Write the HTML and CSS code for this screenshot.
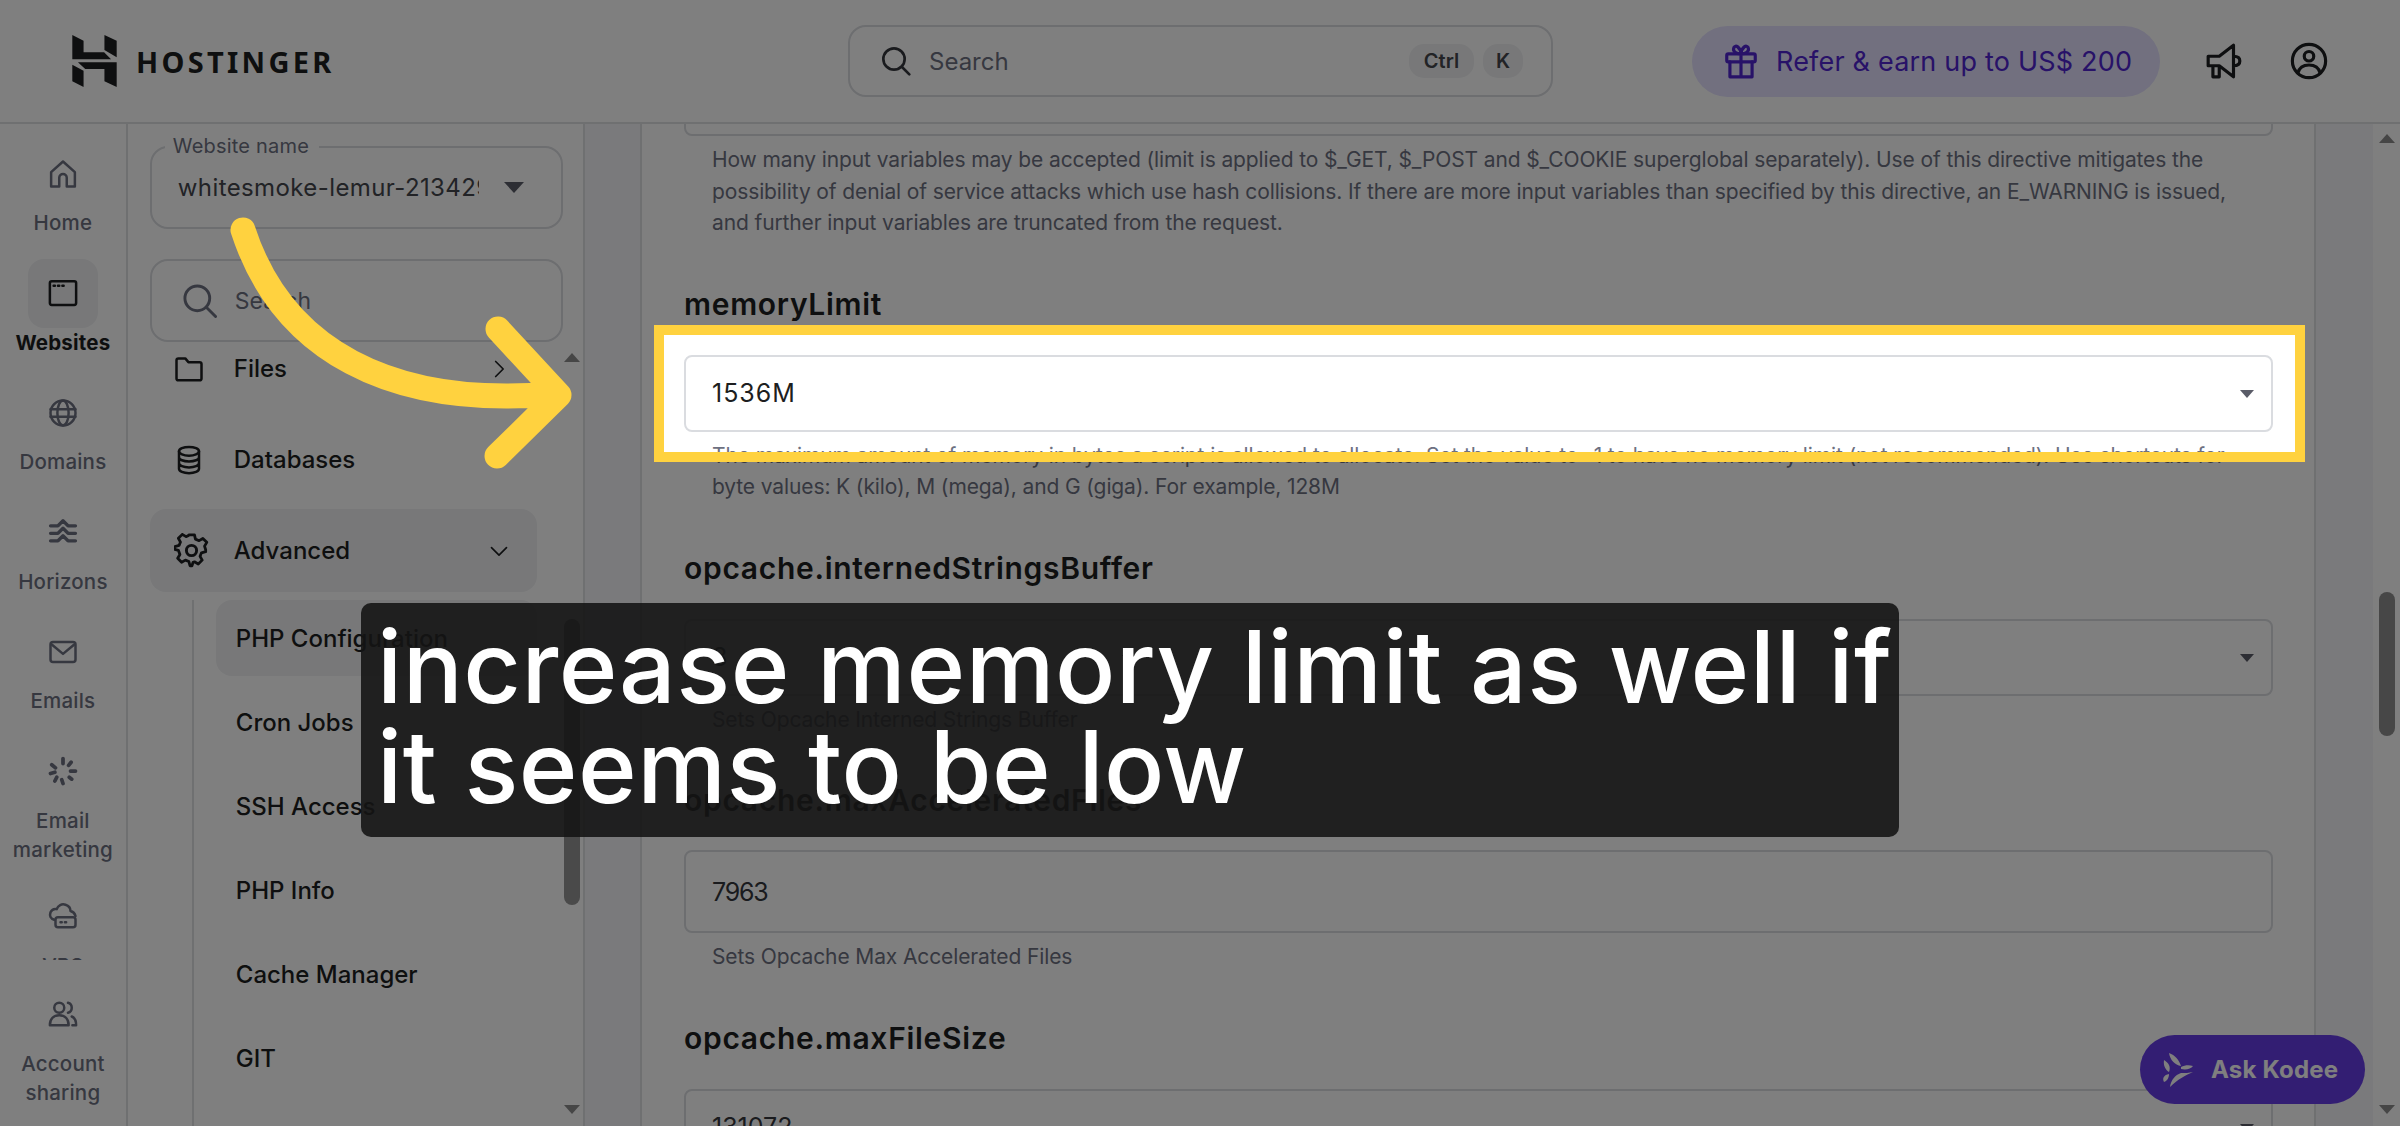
FILE: index.html
```html
<!DOCTYPE html>
<html lang="en">

<head>
    <meta charset="UTF-8">
    <title>PHP Configuration</title>
    <link rel="stylesheet" href="styles.css">
</head>

<body>
    <header class="topbar">
        <div class="brand">
            <svg class="brand-logo" viewBox="216 105 134 157">
                <polygon points="216,105 250,122 250,157 312,157 333,178 216,178" />
                <polygon points="313,105 350,122 350,172 313,150" />
                <polygon points="233,187 350,187 350,262 313,245 313,208 255,208" />
                <polygon points="216,195 250,213 250,262 216,245" />
            </svg>
            <span class="brand-name">HOSTINGER</span>
        </div>
        <div class="top-search">
            <svg class="icon top-search-icon" viewBox="0 0 24 24"><circle cx="10.5" cy="10.5" r="8" /><path d="M16.5 16.5 22 22" /></svg>
            <span class="top-search-text">Search</span>
            <span class="key key-ctrl">Ctrl</span>
            <span class="key key-k">K</span>
        </div>
        <div class="refer">
            <svg class="icon refer-icon" viewBox="0 0 24 24"><rect x="3" y="7.5" width="18" height="5" rx="1" /><path d="M5 12.5V22h14v-9.500M12 7.500V22M12 7.500C9 7.500 6.500 6 7.500 3.500 8.500 1.500 11.500 3 12 7.500ZM12 7.500C15 7.500 17.500 6 16.500 3.500 15.500 1.500 12.500 3 12 7.500Z" /></svg>
            <span>Refer &amp; earn up to US$ 200</span>
        </div>
        <svg class="icon top-icon megaphone" viewBox="0 0 24 24"><path d="M2 9h7l9-7v20l-9-7H2zM5 15v7h4v-7M18 9c2.500 0 4 1 4 3s-1.500 3-4 3" /></svg>
        <svg class="icon top-icon avatar" viewBox="0 0 24 24"><circle cx="12" cy="12" r="10.500" /><circle cx="12" cy="9" r="3" /><path d="M5 19.500c1-4 4-5 7-5s6 1 7 5" /></svg>
    </header>

    <div class="layout">
        <nav class="rail">
            <div class="rail-list">
                <a class="rail-item">
                    <span class="rail-icon"><svg class="icon" viewBox="0 0 24 24"><path d="M2.500 10.500 12 2l9.500 8.500V22H15v-7a3 3 0 0 0-6 0v7H2.500z" /></svg></span>
                    <span class="rail-label">Home</span>
                </a>
                <a class="rail-item is-active">
                    <span class="rail-icon"><svg class="icon" viewBox="0 0 24 24"><rect x="1.500" y="2.500" width="21" height="19" rx="1.500" /><path d="M4.500 6.200h1M8 6.200h1M11.500 6.200h1" /></svg></span>
                    <span class="rail-label">Websites</span>
                </a>
                <a class="rail-item">
                    <span class="rail-icon"><svg class="icon" viewBox="0 0 24 24"><circle cx="12" cy="12" r="10" /><ellipse cx="12" cy="12" rx="4.500" ry="10" /><path d="M2 9h20M2 15h20" /></svg></span>
                    <span class="rail-label">Domains</span>
                </a>
                <a class="rail-item">
                    <span class="rail-icon"><svg class="icon icon-wave" viewBox="0 0 24 24"><path d="M2 7h6l4-4 4 4h6M2 13h6l4-4 4 4h6M2 19h6l4-4 4 4h6" /></svg></span>
                    <span class="rail-label">Horizons</span>
                </a>
                <a class="rail-item">
                    <span class="rail-icon"><svg class="icon" viewBox="0 0 24 24"><rect x="2" y="4" width="20" height="16" rx="2" /><path d="m3 6 9 7.500L21 6" /></svg></span>
                    <span class="rail-label">Emails</span>
                </a>
                <a class="rail-item rail-item-two">
                    <span class="rail-icon"><svg class="icon icon-dots" viewBox="0 0 24 24"><path d="M12 2v4M18.500 5l-2 2.500M22 12h-4M19 18.500 17 17M12 22l-1-3M5.500 20 7 17M2 14l3.500-1M3 7l3 2.500" /></svg></span>
                    <span class="rail-label">Email<br>marketing</span>
                </a>
                <a class="rail-item">
                    <span class="rail-icon"><svg class="icon" viewBox="0 0 24 24"><path d="M5 15c-3-1-4-3-3-6 1-2 3-3 5-2.500C8 3.500 11 2 14 3c3 1 4 3 4 5 2 .5 3.500 2 4 4" /><rect x="6" y="13" width="16" height="8" rx="2" /><path d="M10 17h1M13.500 17h1" /></svg></span>
                    <span class="rail-label">VPS</span>
                </a>
            </div>
            <a class="rail-item rail-account">
                <span class="rail-icon"><svg class="icon" viewBox="0 0 24 24"><circle cx="9" cy="7" r="4" /><path d="M1.500 21c0-5 3-8 7.500-8s7.500 3 7.500 8zM16 3c4 1 4 7 0 8M19 14c2.500 1 3.500 4 3.500 7h-3" /></svg></span>
                <span class="rail-label">Account<br>sharing</span>
            </a>
        </nav>

        <aside class="sidebar">
            <fieldset class="site-picker">
                <legend>Website name</legend>
                <div class="site-row">
                    <span class="site-value">whitesmoke-lemur-213429</span>
                    <span class="caret caret-site"></span>
                </div>
            </fieldset>
            <div class="side-search">
                <svg class="icon side-search-icon" viewBox="0 0 24 24"><circle cx="10.500" cy="10.500" r="8.500" /><path d="M17 17l6 6" /></svg>
                <span>Search</span>
            </div>
            <div class="menu-clip">
                <ul class="menu">
                    <li class="menu-row">
                        <svg class="icon menu-icon" viewBox="0 0 24 24"><path d="M2 5a1.500 1.500 0 0 1 1.500-1.500H9l2.500 3h9A1.500 1.500 0 0 1 22 8v11.500a1.500 1.500 0 0 1-1.500 1.500h-17A1.500 1.500 0 0 1 2 19.500z" /></svg>
                        <span>Files</span>
                        <svg class="icon chevron" viewBox="0 0 24 24"><path d="m8 3 9 9-9 9" /></svg>
                    </li>
                    <li class="menu-row">
                        <svg class="icon menu-icon" viewBox="0 0 24 24"><ellipse cx="12" cy="5" rx="8" ry="3.500" /><path d="M4 5v14c0 2 3.500 3.500 8 3.500s8-1.500 8-3.500V5M4 9.700c0 2 3.500 3.500 8 3.500s8-1.500 8-3.500M4 14.400c0 2 3.500 3.500 8 3.500s8-1.500 8-3.500" /></svg>
                        <span>Databases</span>
                    </li>
                    <li class="menu-row is-open">
                        <svg class="icon menu-icon menu-icon-lg" viewBox="0 0 24 24"><circle cx="12" cy="12" r="3.500" /><path d="M10 2h4l.7 3 2.600 1.100 2.700-1.600 2.800 2.800-1.600 2.700L22 12.600V14l-3 .8-1 2.500 1.500 2.700-2.800 2.800-2.700-1.600-1 .3L12.200 24h-1.400l-.8-3-2.500-1-2.700 1.500-2.800-2.800 1.600-2.700L2.500 13 0 12.300v-2L3 9.500l1-2.400L2.500 4.400l2.800-2.800L8 3.200l1.500-.6z" transform="translate(.6 -.6) scale(.96)" /></svg>
                        <span>Advanced</span>
                        <svg class="icon chevron" viewBox="0 0 24 24"><path d="m3 8 9 9 9-9" /></svg>
                    </li>
                </ul>
                <ul class="submenu">
                    <li class="is-current">PHP Configuration</li>
                    <li>Cron Jobs</li>
                    <li>SSH Access</li>
                    <li>PHP Info</li>
                    <li>Cache Manager</li>
                    <li>GIT</li>
                </ul>
            </div>
            <div class="side-scroll">
                <span class="arrow-up"></span>
                <span class="side-thumb"></span>
                <span class="arrow-down"></span>
            </div>
        </aside>

        <main class="content">
            <div class="panel">
                <section class="field field-first">
                    <div class="box box-cut"></div>
                    <p class="help">How many input variables may be accepted (limit is applied to $_GET, $_POST and $_COOKIE superglobal separately). Use of this directive mitigates the<br>possibility of denial of service attacks which use hash collisions. If there are more input variables than specified by this directive, an E_WARNING is issued,<br>and further input variables are truncated from the request.</p>
                </section>
                <section class="field">
                    <h3>memoryLimit</h3>
                    <div class="box box-mem">1536M<span class="caret caret-box"></span></div>
                    <p class="help">The maximum amount of memory in bytes a script is allowed to allocate. Set the value to -1 to have no memory limit (not recommended). Use shortcuts for<br>byte values: K (kilo), M (mega), and G (giga). For example, 128M</p>
                </section>
                <section class="field">
                    <h3>opcache.internedStringsBuffer</h3>
                    <div class="box">8<span class="caret caret-box"></span></div>
                    <p class="help">Sets Opcache Interned Strings Buffer</p>
                </section>
                <section class="field">
                    <h3 class="label-tall">opcache.maxAcceleratedFiles</h3>
                    <div class="box box-tall">7963</div>
                    <p class="help">Sets Opcache Max Accelerated Files</p>
                </section>
                <section class="field">
                    <h3>opcache.maxFileSize</h3>
                    <div class="box">131072<span class="caret caret-box"></span></div>
                </section>
            </div>
            <div class="page-scroll">
                <span class="arrow-up"></span>
                <span class="page-thumb"></span>
                <span class="arrow-down"></span>
            </div>
        </main>
    </div>

    <button class="kodee">
        <svg class="kodee-icon" viewBox="0 0 32 35"><path d="M8 1c6 2 10 7 12 13C14 13 9 8 8 1zM3 8c5 3 7 7 5 12-3-2-6-6-5-12zM8 22c0 4-2 7-5 8-2-4 0-7 5-8zM9 35c1-7 5-12 11-14 4 0 8 0 12-1-7 3-15 7-23 15zM20 15c4-2 8-2 12-1-2 3-7 4-12 3z" /></svg>
        <span>Ask Kodee</span>
    </button>

    <!-- spotlight on the memoryLimit field, the shadow dims everything else -->
    <div class="spotlight"></div>

    <svg class="pointer" viewBox="0 0 2400 1126">
        <path d="M243 230C282 350 390 408 553 394M498 329 559 395 497 456" />
    </svg>

    <div class="caption">increase memory limit as well if<br>it seems to be low</div>
</body>

</html>
```

FILE: styles.css
```css
/* General styles */
* {
    box-sizing: border-box;
}

body {
    position: relative;
    width: 2400px;
    height: 1126px;
    margin: 0;
    overflow: hidden;
    font-family: 'Inter', 'Noto Sans', sans-serif;
    color: #1d1e20;
    background: #fff;
}

ul {
    margin: 0;
    padding: 0;
    list-style: none;
}

.icon {
    display: block;
    fill: none;
    stroke: currentColor;
    stroke-width: 2;
    stroke-linecap: round;
    stroke-linejoin: round;
}

/* Top bar */
.topbar {
    display: flex;
    align-items: center;
    height: 124px;
    padding-left: 72px;
    border-bottom: 2px solid #dfe0e3;
}

.brand {
    display: flex;
    align-items: center;
    width: 776px;
}

.brand-logo {
    width: 45px;
    height: 52px;
    fill: #1d1e20;
}

.brand-name {
    margin-left: 19px;
    font-family: 'Noto Sans', sans-serif;
    font-size: 29px;
    font-weight: 700;
    letter-spacing: 3.3px;
}

.top-search {
    display: flex;
    align-items: center;
    width: 705px;
    height: 72px;
    padding: 0 28px 0 30px;
    border: 2px solid #dadce0;
    border-radius: 18px;
}

.top-search-icon {
    width: 32px;
    height: 32px;
    color: #35373d;
}

.top-search-text {
    margin-left: 17px;
    font-size: 24px;
    color: #6d7081;
}

.key {
    display: flex;
    align-items: center;
    justify-content: center;
    height: 34px;
    border-radius: 15px;
    background: #f0f1f3;
    font-size: 20px;
    font-weight: 600;
    color: #44464d;
}

.key-ctrl {
    width: 65px;
    margin-left: auto;
}

.key-k {
    width: 40px;
    margin-left: 9px;
}

.refer {
    display: flex;
    align-items: center;
    width: 468px;
    height: 71px;
    margin-left: 139px;
    padding-left: 30px;
    border-radius: 36px;
    background: #e4e1ff;
    font-size: 27px;
    letter-spacing: 0.2px;
    color: #5025d1;
}

.refer-icon {
    width: 38px;
    height: 38px;
    margin-right: 16px;
}

.top-icon {
    width: 38px;
    height: 38px;
}

.megaphone {
    margin-left: 45px;
}

.avatar {
    margin-left: 47px;
}

/* Page columns */
.layout {
    display: flex;
    height: 1002px;
}

/* Left rail */
.rail {
    display: flex;
    flex-direction: column;
    width: 128px;
    border-right: 2px solid #dfe0e3;
}

.rail-list {
    height: 836px;
    padding-top: 15px;
    overflow: hidden;
}

.rail-item {
    display: flex;
    flex-direction: column;
    align-items: center;
    margin-bottom: 21.6px;
    color: #6d7081;
}

.rail-item-two {
    margin-bottom: 18px;
}

.rail-icon {
    display: flex;
    align-items: center;
    justify-content: center;
    width: 70px;
    height: 69px;
    border-radius: 16px;
}

.rail-icon .icon {
    width: 30px;
    height: 30px;
}

.icon-dots {
    stroke-width: 3;
}

.icon-wave {
    stroke-width: 2.6;
}

.rail-label {
    font-size: 20.5px;
    font-weight: 500;
    line-height: 29px;
    letter-spacing: 0.2px;
    text-align: center;
}

.is-active {
    color: #1d1e20;
}

.is-active .rail-icon {
    background: #f0f1f3;
}

.is-active .rail-label {
    font-weight: 700;
}

.rail-account {
    margin: 19.500px 0 0;
}

/* Second sidebar */
.sidebar {
    position: relative;
    display: flex;
    flex-direction: column;
    width: 458px;
    padding: 9px 0 0 22px;
    border-right: 2px solid #dfe0e3;
}

.site-picker {
    width: 413px;
    height: 96px;
    margin: 0;
    padding: 0;
    border: 2px solid #dadce0;
    border-radius: 18px;
}

.site-picker legend {
    margin-left: 13px;
    padding: 0 10px 0 8px;
    font-size: 20px;
    line-height: 27px;
    letter-spacing: 0.2px;
    color: #6d7081;
}

.site-row {
    display: flex;
    align-items: center;
    height: 54px;
    padding-left: 26px;
}

.site-value {
    width: 301px;
    flex: none;
    overflow: hidden;
    font-size: 24px;
    letter-spacing: 0.4px;
    white-space: nowrap;
    color: #44464d;
}

.caret {
    width: 0;
    height: 0;
    border-style: solid;
    border-color: #5a5c68 transparent transparent;
}

.caret-site {
    margin-left: 25px;
    border-width: 11px 10px 0;
}

.side-search {
    display: flex;
    align-items: center;
    width: 413px;
    height: 83px;
    margin-top: 30px;
    padding-left: 30px;
    border: 2px solid #dadce0;
    border-radius: 18px;
    font-size: 23px;
    color: #6d7081;
}

.side-search-icon {
    width: 35px;
    height: 35px;
    margin-right: 18px;
}

.menu-clip {
    flex: 1;
    overflow: hidden;
}

.menu {
    margin-top: -15px;
}

.menu-row {
    display: flex;
    align-items: center;
    width: 387px;
    height: 83px;
    margin-bottom: 8px;
    padding: 0 28px 0 24px;
    border-radius: 16px;
    font-size: 24px;
    font-weight: 500;
}

.menu-row.is-open {
    background: #f0f1f3;
}

.menu-icon {
    width: 30px;
    height: 30px;
    margin-right: 30px;
    flex: none;
}

.menu-icon-lg {
    width: 35px;
    height: 35px;
    margin-right: 25px;
}

.chevron {
    width: 20px;
    height: 20px;
    margin-left: auto;
}

.submenu {
    width: 345px;
    height: 600px;
    margin-left: 42px;
    padding-left: 22px;
    border-left: 2px solid #dfe0e3;
    font-size: 24px;
    font-weight: 500;
}

.submenu li {
    display: flex;
    align-items: center;
    height: 76px;
    margin-bottom: 8.200px;
    padding-left: 20px;
    border-radius: 16px;
}

.submenu .is-current {
    background: #f0f1f3;
}

/* Scrollbars */
.arrow-up,
.arrow-down {
    position: absolute;
    width: 0;
    height: 0;
    border-style: solid;
    border-color: transparent;
}

.arrow-up {
    border-width: 0 8px 9px;
    border-bottom-color: #8c8c8c;
}

.arrow-down {
    border-width: 9px 8px 0;
    border-top-color: #8c8c8c;
}

.side-scroll {
    position: absolute;
    top: 0;
    left: 436px;
    width: 16px;
    height: 100%;
}

.side-scroll .arrow-up {
    top: 229px;
}

.side-scroll .arrow-down {
    top: 981px;
}

.side-thumb {
    position: absolute;
    top: 495px;
    width: 16px;
    height: 286px;
    border-radius: 8px;
    background: #949494;
}

/* Main content */
.content {
    display: flex;
    flex: 1;
    background: #f4f5f8;
}

.panel {
    width: 1676px;
    height: 100%;
    margin-left: 55px;
    padding: 0 41px 0 42px;
    overflow: hidden;
    border-left: 2px solid #dfe0e3;
    border-right: 2px solid #dfe0e3;
    background: #fff;
}

.field {
    margin-bottom: 45px;
}

.field h3 {
    margin: 0 0 31px;
    font-size: 30px;
    font-weight: 600;
    line-height: 40px;
    letter-spacing: 0.7px;
}

.field .label-tall {
    margin-bottom: 30px;
}

.box {
    position: relative;
    display: flex;
    align-items: center;
    height: 77px;
    padding-left: 26px;
    border: 2px solid #dadce0;
    border-radius: 8px;
    font-size: 25px;
    color: #35373d;
}

.box-mem {
    letter-spacing: 1px;
    color: #1d1e20;
}

.box-cut {
    height: 60px;
    margin-top: -48px;
}

.box-tall {
    height: 83px;
    letter-spacing: -1.2px;
}

.caret-box {
    position: absolute;
    top: 33px;
    right: 17px;
    border-width: 8px 7.5px 0;
}

.help {
    margin: 8px 0 0;
    padding-left: 28px;
    font-size: 21px;
    line-height: 31.5px;
    white-space: nowrap;
    letter-spacing: -0.12px;
    color: #6d7081;
}

.page-scroll {
    position: relative;
    width: 27px;
    margin-left: 57px;
    background: #fff;
}

.page-scroll .arrow-up {
    top: 10px;
    left: 6px;
}

.page-scroll .arrow-down {
    top: 981px;
    left: 6px;
}

.page-thumb {
    position: absolute;
    top: 468px;
    left: 6px;
    width: 16px;
    height: 144px;
    border-radius: 8px;
    background: #8e8e8e;
}

/* Floating button */
.kodee {
    position: absolute;
    top: 1035px;
    left: 2140px;
    display: flex;
    align-items: center;
    width: 225px;
    height: 69px;
    padding: 0 0 0 21px;
    border: none;
    border-radius: 35px;
    background: #673de6;
    font-family: inherit;
    font-size: 24px;
    font-weight: 700;
    letter-spacing: 0.2px;
    color: #fff;
}

.kodee-icon {
    width: 32px;
    height: 35px;
    margin-right: 18px;
    fill: #fff;
}

/* Tutorial overlay */
.spotlight {
    position: absolute;
    top: 325px;
    left: 654px;
    width: 1651px;
    height: 137px;
    border: 10px solid #ffd23f;
    box-shadow: 0 0 0 3000px rgba(0, 0, 0, 0.5);
}

.pointer {
    position: absolute;
    top: 0;
    left: 0;
    width: 2400px;
    height: 1126px;
    fill: none;
    stroke: #ffd23f;
    stroke-width: 25;
    stroke-linecap: round;
    stroke-linejoin: round;
}

.caption {
    position: absolute;
    top: 603px;
    left: 361px;
    width: 1538px;
    height: 234px;
    padding: 14px 0 0 16px;
    border-radius: 10px;
    background: rgba(20, 20, 20, 0.89);
    font-size: 100px;
    font-weight: 500;
    line-height: 100px;
    letter-spacing: 0.5px;
    white-space: nowrap;
    color: #fff;
}
```
